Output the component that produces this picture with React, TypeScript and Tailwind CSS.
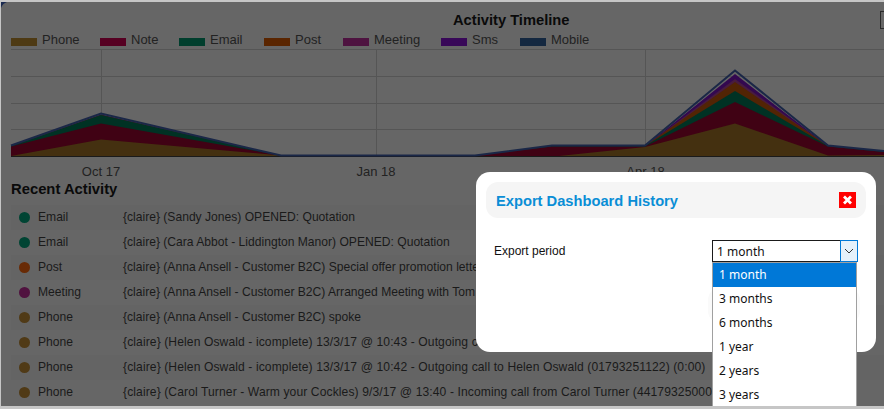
const legend = [
  { name: "Phone", color: "bg-[#4e3a14]", w: "w-[89px]" },
  { name: "Note", color: "bg-[#560022]", w: "w-[79px]" },
  { name: "Email", color: "bg-[#003e2d]", w: "w-[85px]" },
  { name: "Post", color: "bg-[#5a2500]", w: "w-[79px]" },
  { name: "Meeting", color: "bg-[#4e1340]", w: "w-[98px]" },
  { name: "Sms", color: "bg-[#380858]", w: "w-[79px]" },
  { name: "Mobile", color: "bg-[#142840]", w: "w-[80px]" },
];

const rows = [
  { type: "Email", dot: "bg-[#004433]", text: "{claire} (Sandy Jones) OPENED: Quotation" },
  { type: "Email", dot: "bg-[#004433]", text: "{claire} (Cara Abbot - Liddington Manor) OPENED: Quotation" },
  { type: "Post", dot: "bg-[#682a05]", text: "{claire} (Anna Ansell - Customer B2C) Special offer promotion letter" },
  { type: "Meeting", dot: "bg-[#50123f]", text: "{claire} (Anna Ansell - Customer B2C) Arranged Meeting with Tom" },
  { type: "Phone", dot: "bg-[#503a16]", text: "{claire} (Anna Ansell - Customer B2C) spoke" },
  { type: "Phone", dot: "bg-[#503a16]", text: "{claire} (Helen Oswald - icomplete) 13/3/17 @ 10:43 - Outgoing call to Helen Oswald (01793251122) (0:00)" },
  { type: "Phone", dot: "bg-[#503a16]", text: "{claire} (Helen Oswald - icomplete) 13/3/17 @ 10:42 - Outgoing call to Helen Oswald (01793251122) (0:00)" },
  { type: "Phone", dot: "bg-[#503a16]", text: "{claire} (Carol Turner - Warm your Cockles) 9/3/17 @ 13:40 - Incoming call from Carol Turner (44179325000" },
];

const options = ["1 month", "3 months", "6 months", "1 year", "2 years", "3 years"];

const xs = [11, 101, 281, 475, 552, 645, 735, 828, 884];
const mobileTops = [145.5, 113.5, 155.5, 155.5, 145.5, 145.5, 70.5, 145.5, 151];
const layers: { fill: string; tops: number[] }[] = [
  { fill: "#330850", tops: [146, 114.5, 155.5, 155.5, 146, 146, 74, 146, 151] },
  { fill: "#481c3f", tops: [146, 115, 155.5, 155.5, 146, 146, 79, 146, 151] },
  { fill: "#522404", tops: [146, 115, 155.5, 155.5, 146, 146, 82, 146, 151] },
  { fill: "#003224", tops: [146, 115, 155.5, 155.5, 146, 146, 91, 146, 151] },
  { fill: "#400214", tops: [146.5, 123.5, 155.5, 155.5, 146.5, 146.5, 102, 146.5, 152] },
];
const phone = "11,156 101,139.5 281,155.5 559,156 645,147 735,123.5 828,155.5 884,155 884,156";

function poly(tops: number[]) {
  const top = xs.map((x, i) => `${x},${tops[i]}`).join(" ");
  return `${top} 884,156 11,156`;
}

export default function App() {
  return (
    <div className="w-[884px] h-[409px] overflow-hidden bg-[#c6c6c6] pt-[2px] pl-[1px] font-['Liberation_Sans',Arial,sans-serif]">
      <div className="relative w-[883px] h-[404px] overflow-hidden bg-[#666666] text-[#1a1a1a]">
        <svg className="absolute left-0 top-0" width="7" height="7" viewBox="0 0 7 7">
          <path d="M0 0H6C3 1 1 3 0 6Z" fill="#1b2a50" />
        </svg>

        <div className="flex h-[30px] pt-[9px]">
          <h2 className="ml-[452px] mt-px h-[16px] text-[14.7px] leading-[16px] font-bold text-[#0a0a0a]">Activity Timeline</h2>
          <div className="ml-auto h-[18px] w-[4px] border-y border-l border-[#2a2a2a]" />
        </div>

        <div className="flex h-[16px] pl-[10px]">
          {legend.map((l) => (
            <div key={l.name} className={`flex shrink-0 items-start gap-[5px] ${l.w}`}>
              <span className={`mt-[6px] h-[8px] w-[26px] shrink-0 ${l.color}`} />
              <span className="text-[13px] leading-[15px] text-[#222222]">{l.name}</span>
            </div>
          ))}
        </div>

        <svg className="block" width="883" height="132" viewBox="1 48 883 132">
          <g stroke="#555555" strokeWidth="1" shapeRendering="crispEdges">
            <line x1="11" x2="884" y1="49.5" y2="49.5" />
            <line x1="11" x2="884" y1="76.5" y2="76.5" />
            <line x1="11" x2="884" y1="103.5" y2="103.5" />
            <line x1="11" x2="884" y1="129.5" y2="129.5" />
            <line x1="101.5" x2="101.5" y1="50" y2="156" />
            <line x1="376.5" x2="376.5" y1="50" y2="156" />
            <line x1="645.5" x2="645.5" y1="50" y2="156" />
          </g>
          {layers.map((l) => (
            <polygon key={l.fill} points={poly(l.tops)} fill={l.fill} />
          ))}
          <polygon points={phone} fill="#443010" />
          <rect x="11" y="156" width="873" height="1" fill="#1a1a1a" />
          <polyline
            points={xs.map((x, i) => `${x},${mobileTops[i]}`).join(" ")}
            fill="none"
            stroke="#1a2747"
            strokeWidth="2"
          />
          <g fontSize="13" fill="#222222" textAnchor="middle" fontFamily="'Liberation Sans', Arial, sans-serif">
            <text x="101" y="176">Oct 17</text>
            <text x="376" y="176">Jan 18</text>
            <text x="645.5" y="176">Apr 18</text>
          </g>
        </svg>

        <h3 className="ml-[10px] mt-px h-[16px] text-[14.8px] leading-[16px] font-bold text-[#0a0a0a]">Recent Activity</h3>

        <ul className="mt-[8px] ml-[10px]">
          {rows.map((r, i) => (
            <li key={i} className={`flex h-[25px] items-center whitespace-nowrap text-[12.1px] ${i % 2 === 0 ? "bg-[#646464]" : ""}`}>
              <span className={`ml-[8px] h-[11px] w-[11px] shrink-0 rounded-full ${r.dot}`} />
              <span className="ml-[8px] w-[85px] shrink-0">{r.type}</span>
              <span className={i >= 5 ? "tracking-[0.1px]" : ""}>{r.text}</span>
            </li>
          ))}
        </ul>

        <div className="absolute left-[475px] top-[170px] h-[180px] w-[400px] rounded-[14px] bg-white p-[10px]">
          <div className="flex h-[36px] items-center justify-between rounded-[12px] bg-[#f5f5f5] pl-[10px] pr-[10px] pt-[2px]">
            <span className="text-[14.7px] font-bold text-[#0a8ed6]">Export Dashboard History</span>
            <span className="-mt-[2px] flex h-[16px] w-[17px] items-center justify-center bg-[#ff0000]">
              <svg width="11" height="10" viewBox="0 0 11 10">
                <path d="M2 1.5 9 8.5M9 1.5 2 8.5" stroke="#ffffff" strokeWidth="2.8" />
              </svg>
            </span>
          </div>

          <div className="mt-[22px] flex items-start pl-[8px] text-[12px] text-[#111111]">
            <span className="mt-[2px] w-[218px] leading-[18px]">Export period</span>
            <div className="relative w-[146px] font-['Noto_Sans',sans-serif]">
              <div className="flex h-[22px] items-stretch border border-[#1a1a1a] bg-white">
                <span className="flex-1 pl-[4px] leading-[21px]">1 month</span>
                <span className="-my-px -mr-px flex w-[18px] items-center justify-center border border-[#0078d7] bg-[#e5f1fb]">
                  <svg width="10" height="6" viewBox="0 0 10 6">
                    <path d="M1 1 5 5 9 1" fill="none" stroke="#333333" strokeWidth="1" />
                  </svg>
                </span>
              </div>
              <div className="absolute -left-[4px] top-[48px] h-[35px] w-[152px] rounded-[12px] bg-[#fafafa]" />
              <ul className="absolute left-0 top-[22px] z-10 w-[145px] border border-[#a0a0a0] bg-white">
                {options.map((o, i) => (
                  <li key={o} className={`h-[24px] pl-[6px] leading-[24px] ${i === 0 ? "bg-[#0078d7] text-white" : ""}`}>{o}</li>
                ))}
              </ul>
            </div>
          </div>
        </div>
      </div>
    </div>
  );
}
